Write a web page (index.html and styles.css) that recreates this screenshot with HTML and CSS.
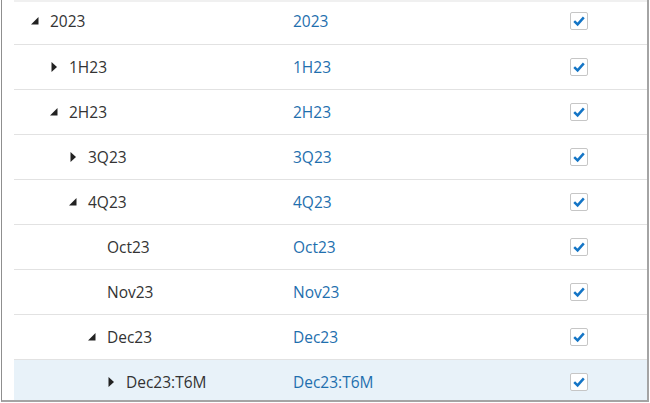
FILE: index.html
```html
<!DOCTYPE html>
<html lang="en">
<head>
    <meta charset="UTF-8">
    <title>Tree Table</title>
    <link rel="stylesheet" href="styles.css">
</head>
<body>
    <div class="frame">
        <div class="strip"></div>
        <div class="tree">
            <div class="row first">
                <div class="name lvl-0"><span class="toggle"><svg viewBox="0 0 10 10" width="10" height="10"><polygon points="8.5,1 8.5,8.5 1,8.5"/></svg></span>2023</div>
                <div class="alias">2023</div>
                <div class="check"><span class="box"><svg viewBox="0 0 18 18" width="18" height="18"><path d="M4.2 9.2 L7.6 12.4 L13.8 5.4"/></svg></span></div>
            </div>
            <div class="row">
                <div class="name lvl-1"><span class="toggle"><svg viewBox="0 0 10 10" width="10" height="10"><polygon points="2.5,0 8,5 2.5,10"/></svg></span>1H23</div>
                <div class="alias">1H23</div>
                <div class="check"><span class="box"><svg viewBox="0 0 18 18" width="18" height="18"><path d="M4.2 9.2 L7.6 12.4 L13.8 5.4"/></svg></span></div>
            </div>
            <div class="row">
                <div class="name lvl-1"><span class="toggle"><svg viewBox="0 0 10 10" width="10" height="10"><polygon points="8.5,1 8.5,8.5 1,8.5"/></svg></span>2H23</div>
                <div class="alias">2H23</div>
                <div class="check"><span class="box"><svg viewBox="0 0 18 18" width="18" height="18"><path d="M4.2 9.2 L7.6 12.4 L13.8 5.4"/></svg></span></div>
            </div>
            <div class="row">
                <div class="name lvl-2"><span class="toggle"><svg viewBox="0 0 10 10" width="10" height="10"><polygon points="2.5,0 8,5 2.5,10"/></svg></span>3Q23</div>
                <div class="alias">3Q23</div>
                <div class="check"><span class="box"><svg viewBox="0 0 18 18" width="18" height="18"><path d="M4.2 9.2 L7.6 12.4 L13.8 5.4"/></svg></span></div>
            </div>
            <div class="row">
                <div class="name lvl-2"><span class="toggle"><svg viewBox="0 0 10 10" width="10" height="10"><polygon points="8.5,1 8.5,8.5 1,8.5"/></svg></span>4Q23</div>
                <div class="alias">4Q23</div>
                <div class="check"><span class="box"><svg viewBox="0 0 18 18" width="18" height="18"><path d="M4.2 9.2 L7.6 12.4 L13.8 5.4"/></svg></span></div>
            </div>
            <div class="row">
                <div class="name lvl-3"><span class="toggle"></span>Oct23</div>
                <div class="alias">Oct23</div>
                <div class="check"><span class="box"><svg viewBox="0 0 18 18" width="18" height="18"><path d="M4.2 9.2 L7.6 12.4 L13.8 5.4"/></svg></span></div>
            </div>
            <div class="row">
                <div class="name lvl-3"><span class="toggle"></span>Nov23</div>
                <div class="alias">Nov23</div>
                <div class="check"><span class="box"><svg viewBox="0 0 18 18" width="18" height="18"><path d="M4.2 9.2 L7.6 12.4 L13.8 5.4"/></svg></span></div>
            </div>
            <div class="row">
                <div class="name lvl-3"><span class="toggle"><svg viewBox="0 0 10 10" width="10" height="10"><polygon points="8.5,1 8.5,8.5 1,8.5"/></svg></span>Dec23</div>
                <div class="alias">Dec23</div>
                <div class="check"><span class="box"><svg viewBox="0 0 18 18" width="18" height="18"><path d="M4.2 9.2 L7.6 12.4 L13.8 5.4"/></svg></span></div>
            </div>
            <div class="row selected">
                <div class="name lvl-4"><span class="toggle"><svg viewBox="0 0 10 10" width="10" height="10"><polygon points="2.5,0 8,5 2.5,10"/></svg></span>Dec23:T6M</div>
                <div class="alias">Dec23:T6M</div>
                <div class="check"><span class="box"><svg viewBox="0 0 18 18" width="18" height="18"><path d="M4.2 9.2 L7.6 12.4 L13.8 5.4"/></svg></span></div>
            </div>
        </div>
    </div>
</body>
</html>
```

FILE: styles.css
```css
body {
    margin: 0;
    background-color: #fff;
    font-family: 'Open Sans', Arial, sans-serif;
    font-size: 15.5px;
    color: #333;
    overflow: hidden;
}

.frame {
    margin-left: 1px;
    width: 633px;
    height: 400px;
    padding-left: 12px;
    border-left: 1px solid #8f8f8f;
    border-right: 2px solid #a4a4a4;
    border-bottom: 2px solid #a4a4a4;
    overflow: hidden;
}

.strip {
    height: 2px;
    background-color: #f0f0f0;
}

.row {
    display: grid;
    grid-template-columns: 279px 277px 1fr;
    align-items: center;
    height: 45px;
    box-sizing: border-box;
    border-bottom: 1px solid #e2e2e2;
}

.row.first {
    height: 43px;
    padding-bottom: 5px;
}

.row.selected {
    background-color: #e8f2f9;
}

.name {
    display: flex;
    align-items: center;
}

.lvl-0 { padding-left: 16px; }
.lvl-1 { padding-left: 35px; }
.lvl-2 { padding-left: 54px; }
.lvl-3 { padding-left: 73px; }
.lvl-4 { padding-left: 92px; }

.toggle {
    width: 20px;
    height: 10px;
    display: flex;
    align-items: center;
}

.toggle svg {
    display: block;
    fill: #222;
}

.alias {
    color: #1f6fae;
}

.check {
    display: flex;
    align-items: center;
}

.box {
    width: 18px;
    height: 18px;
    box-sizing: border-box;
    border: 1px solid #c6c6c6;
    border-radius: 2px;
    background-color: #fff;
    position: relative;
}

.box svg {
    position: absolute;
    left: -1px;
    top: -1px;
    fill: none;
    stroke: #1475c6;
    stroke-width: 2.5;
}
```
